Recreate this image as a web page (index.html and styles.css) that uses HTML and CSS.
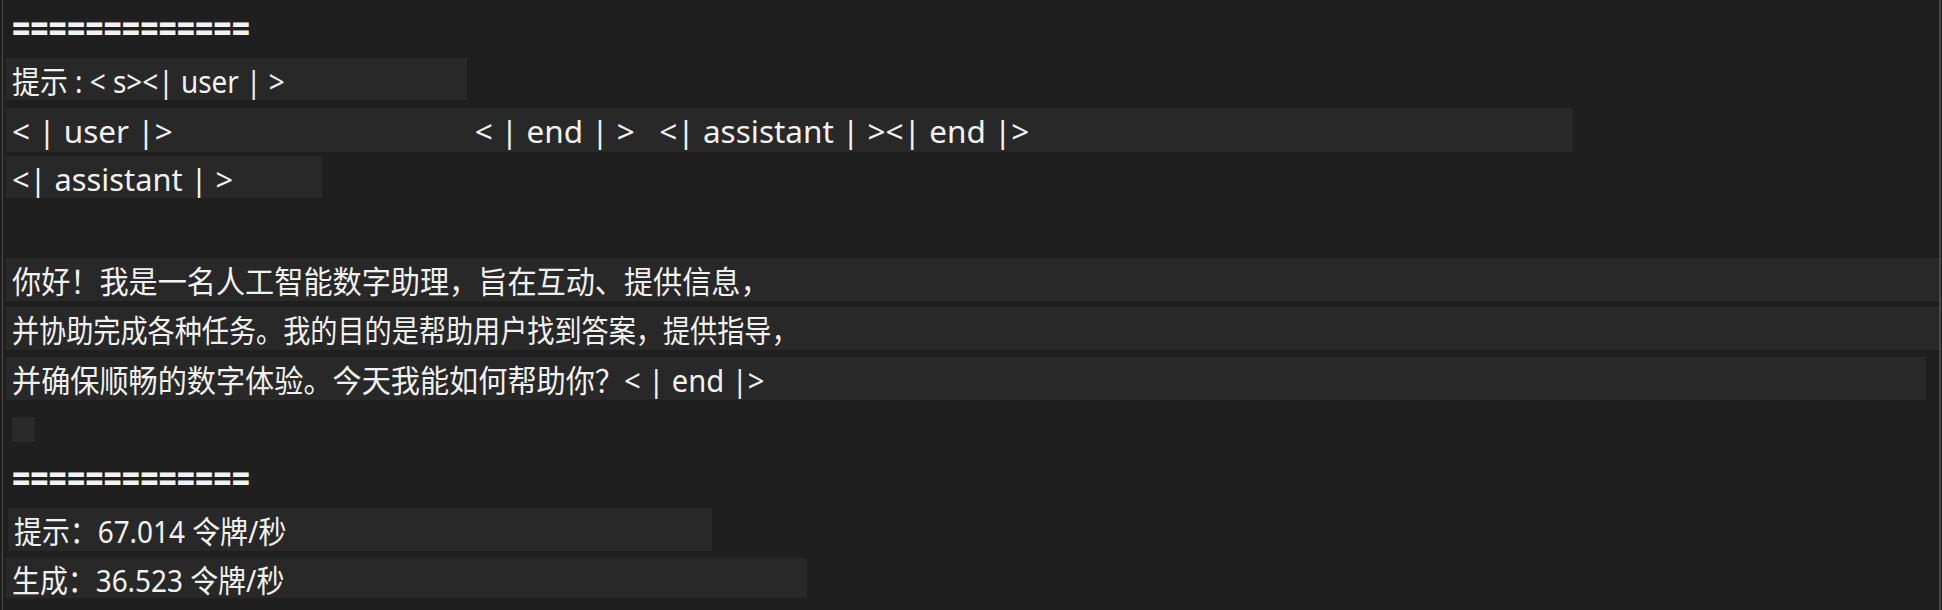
FILE: index.html
```html
<!DOCTYPE html>
<html lang="zh">
<head>
<meta charset="utf-8">
<link rel="stylesheet" href="styles.css">
</head>
<body>
<div class="screen">
  <div class="sep sep-top"><span class="eq">=============</span></div>
  <div class="row r1"><span class="t">提示 : &lt; s&gt;&lt;| user | &gt;</span></div>
  <div class="row r2"><span class="w">&lt; | user |&gt;</span><span class="w gap">&lt; | end | &gt;   &lt;| assistant | &gt;&lt;| end |&gt;</span></div>
  <div class="row r3"><span class="w w3">&lt;| assistant | &gt;</span></div>
  <div class="row r4"><span class="t wide">你好！我是一名人工智能数字助理，旨在互动、提供信息，</span></div>
  <div class="row r5"><span class="t narrow">并协助完成各种任务。我的目的是帮助用户找到答案，提供指导，</span></div>
  <div class="row r6"><span class="t wide">并确保顺畅的数字体验。今天我能如何帮助你？&lt; | end |&gt;</span></div>
  <div class="cursor"></div>
  <div class="sep sep-mid"><span class="eq">=============</span></div>
  <div class="row r7"><span class="t">提示：67.014 令牌/秒</span></div>
  <div class="row r8"><span class="t">生成：36.523 令牌/秒</span></div>
</div>
</body>
</html>
```

FILE: styles.css
```css
html, body {
  margin: 0;
  padding: 0;
  background: #1f1f1f;
}

.screen {
  height: 610px;
  box-sizing: border-box;
  margin: 0 1px 0 2px;
  border-left: 1px solid #4a4a4a;
  border-right: 2px solid #4a4a4a;
  padding: 7px 0 0 3px;
  display: flex;
  flex-direction: column;
  align-items: flex-start;
  font-family: "Noto Sans", "Noto Sans CJK SC", sans-serif;
  font-size: 31px;
  color: #f2f2f2;
  white-space: pre;
  overflow: hidden;
}

.sep {
  height: 42px;
  line-height: 42px;
  padding-left: 6px;
  font-size: 32px;
}

.eq {
  display: inline-block;
  line-height: 20px;
  font-weight: 700;
  transform: scaleY(1.3);
  transform-origin: 50% 59%;
}

.row {
  box-sizing: border-box;
  height: 43px;
  line-height: 40px;
  padding: 3px 0 0 6px;
  background: #282828;
}

.t {
  display: inline-block;
  transform: scaleX(0.9);
  transform-origin: 0 50%;
}

.t.wide { transform: scaleX(0.94); }
.t.narrow { transform: scaleX(0.875); }

.w {
  display: inline-block;
  font-size: 31.5px;
}

.w3 { font-size: 30.8px; }

.r1 { margin-top: 9px; width: 461px; height: 42px; }
.r2 { margin-top: 8px; width: 1567px; height: 44px; }
.r3 { margin-top: 4px; width: 316px; height: 42px; }
.r4 { margin-top: 60px; align-self: stretch; }
.r5 { margin-top: 6px; align-self: stretch; }
.r6 { margin-top: 7px; width: 1920px; }

.gap { margin-left: 302px; }

.cursor {
  margin: 17px 0 0 6px;
  width: 23px;
  height: 25px;
  background: #2a2a2a;
}

.sep-mid { margin-top: 15px; }

.r7 { margin-top: 9px; width: 704px; margin-left: 2px; }
.r8 { margin-top: 7px; width: 801px; height: 40px; line-height: 38px; }
```
